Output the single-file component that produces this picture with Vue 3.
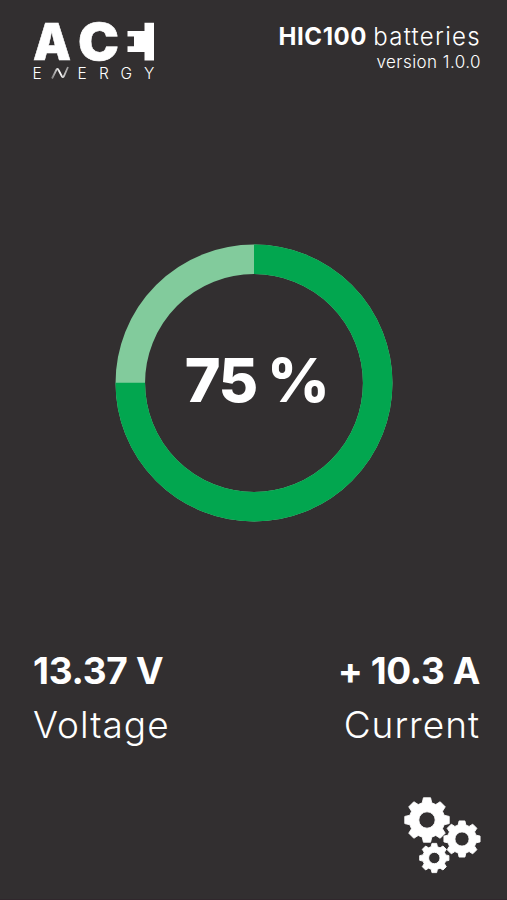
<script setup>
import { ref, computed } from 'vue';

const charge = ref(75);
const voltage = ref('13.37 V');
const current = ref('+ 10.3 A');

const radius = 123.7;
const circumference = 2 * Math.PI * radius;
const dash = computed(() => `${circumference * charge.value / 100} ${circumference}`);

const gears = [
    { x: 23, y: 23, r: 22.5, hole: 8.2 },
    { x: 58, y: 42, r: 18.3, hole: 7.1 },
    { x: 30.3, y: 61, r: 14.8, hole: 5.7 }
];

function gearPath({ x, y, r, hole }) {
    const teeth = 8;
    const inner = r * 0.79;
    const points = [];
    for (let i = 0; i < teeth; i++) {
        const mid = (i / teeth) * 2 * Math.PI;
        for (const [offset, dist] of [[-0.27, inner], [-0.16, r], [0.16, r], [0.27, inner]]) {
            points.push(`${(x + dist * Math.sin(mid + offset)).toFixed(2)} ${(y - dist * Math.cos(mid + offset)).toFixed(2)}`);
        }
    }
    return `M${points.join('L')}Z M${x - hole} ${y}a${hole} ${hole} 0 1 0 ${2 * hole} 0a${hole} ${hole} 0 1 0 ${-2 * hole} 0Z`;
}
</script>

<template>
    <div class="screen">
        <header class="header">
            <svg class="logo" viewBox="0 0 122 60" role="img" aria-label="ACE Energy">
                <defs>
                    <linearGradient id="wave" x1="0" x2="1">
                        <stop offset="0" stop-color="#fff" stop-opacity="0.4" />
                        <stop offset="0.5" stop-color="#fff" />
                        <stop offset="1" stop-color="#fff" stop-opacity="0.5" />
                    </linearGradient>
                </defs>
                <text class="logo-main" x="0" y="40.3" textLength="38" lengthAdjust="spacingAndGlyphs">A</text>
                <text class="logo-main" x="45" y="40.3" textLength="41" lengthAdjust="spacingAndGlyphs">C</text>
                <path d="M111.5 2.7H121V40.5H111.5V32H94.5V26.2H101V16.6H94.5V11H111.5Z" />
                <text class="logo-sub" x="-0.5" y="58.5">E</text>
                <path class="logo-wave" d="M19 58.5L23.5 49.5Q24.5 48 25.5 50L29 56.5Q30 58 31 56L35 47" />
                <text class="logo-sub" x="44.5" y="58.5">E</text>
                <text class="logo-sub" x="66" y="58.5">R</text>
                <text class="logo-sub" x="87.5" y="58.5">G</text>
                <text class="logo-sub" x="111" y="58.5">Y</text>
            </svg>
            <div class="product">
                <div class="product-name"><strong>HIC100</strong><span>batteries</span></div>
                <div class="version">version 1.0.0</div>
            </div>
        </header>

        <main class="gauge">
            <svg class="ring" viewBox="0 0 278 278">
                <circle class="ring-track" cx="139" cy="139" :r="radius" />
                <circle class="ring-value" cx="139" cy="139" :r="radius" :stroke-dasharray="dash" transform="rotate(-90 139 139)" />
            </svg>
            <div class="charge">{{ charge }} %</div>
        </main>

        <section class="readings">
            <div>
                <div class="value voltage">{{ voltage }}</div>
                <div class="label">Voltage</div>
            </div>
            <div class="right">
                <div class="value current">{{ current }}</div>
                <div class="label">Current</div>
            </div>
        </section>

        <footer class="footer">
            <button class="settings" aria-label="Settings">
                <svg viewBox="0 0 77 77">
                    <path v-for="(gear, i) in gears" :key="i" :d="gearPath(gear)" fill-rule="evenodd" />
                </svg>
            </button>
        </footer>
    </div>
</template>

<style>
body {
    background: #322f30;
}
</style>

<style scoped>
.screen {
    box-sizing: border-box;
    height: 900px;
    padding: 20px 26px 0 33px;
    display: flex;
    flex-direction: column;
    background: #322f30;
    color: #fff;
    font-family: Inter, "Open Sans", sans-serif;
    border-bottom: 1px solid #30272c;
}

.header {
    display: flex;
    justify-content: space-between;
    height: 60px;
}

.logo {
    width: 122px;
    height: 60px;
    fill: #fff;
    overflow: visible;
}

.logo-main {
    font-size: 51px;
    font-weight: 900;
    stroke: #fff;
    stroke-width: 0.6;
}

.logo-sub {
    font-size: 15.5px;
    font-weight: 300;
}

.logo-wave {
    fill: none;
    stroke: url(#wave);
    stroke-width: 1.8;
}

.product {
    text-align: right;
    white-space: nowrap;
}

.product-name {
    display: flex;
    gap: 6px;
    justify-content: flex-end;
    font-size: 24px;
    line-height: 34px;
}

.product-name strong {
    letter-spacing: 0.6px;
}

.product-name span {
    font-weight: 300;
    letter-spacing: 1.3px;
}

.version {
    font-size: 17px;
    font-weight: 300;
    line-height: 16px;
    letter-spacing: 0.45px;
}

.gauge {
    display: grid;
    place-items: center;
    margin: 164px 0 0 -7px;
    height: 278px;
}

.ring,
.charge {
    grid-area: 1 / 1;
}

.ring {
    width: 278px;
    height: 278px;
    fill: none;
    stroke-width: 29.5;
}

.ring-track {
    stroke: #82cb9c;
}

.ring-value {
    stroke: #02a64f;
}

.charge {
    padding: 0 0 6px 6px;
    font-size: 61px;
    font-weight: 800;
    letter-spacing: -1.4px;
    word-spacing: -2px;
    white-space: nowrap;
}

.readings {
    display: flex;
    justify-content: space-between;
    margin-top: 122px;
}

.right {
    margin-right: 1px;
    text-align: right;
}

.value {
    font-size: 37px;
    font-weight: 700;
    line-height: 54px;
}

.voltage {
    letter-spacing: -0.3px;
}

.current {
    letter-spacing: -0.4px;
}

.label {
    font-size: 37px;
    font-weight: 300;
    line-height: 54px;
    letter-spacing: 1px;
}

.footer {
    display: flex;
    justify-content: flex-end;
    margin-top: 45px;
}

.settings {
    width: 77px;
    height: 77px;
    padding: 0;
    border: none;
    background: none;
    cursor: pointer;
}

.settings svg {
    display: block;
    fill: #fff;
    stroke: #fff;
    stroke-width: 0.9;
    stroke-linejoin: round;
}
</style>
